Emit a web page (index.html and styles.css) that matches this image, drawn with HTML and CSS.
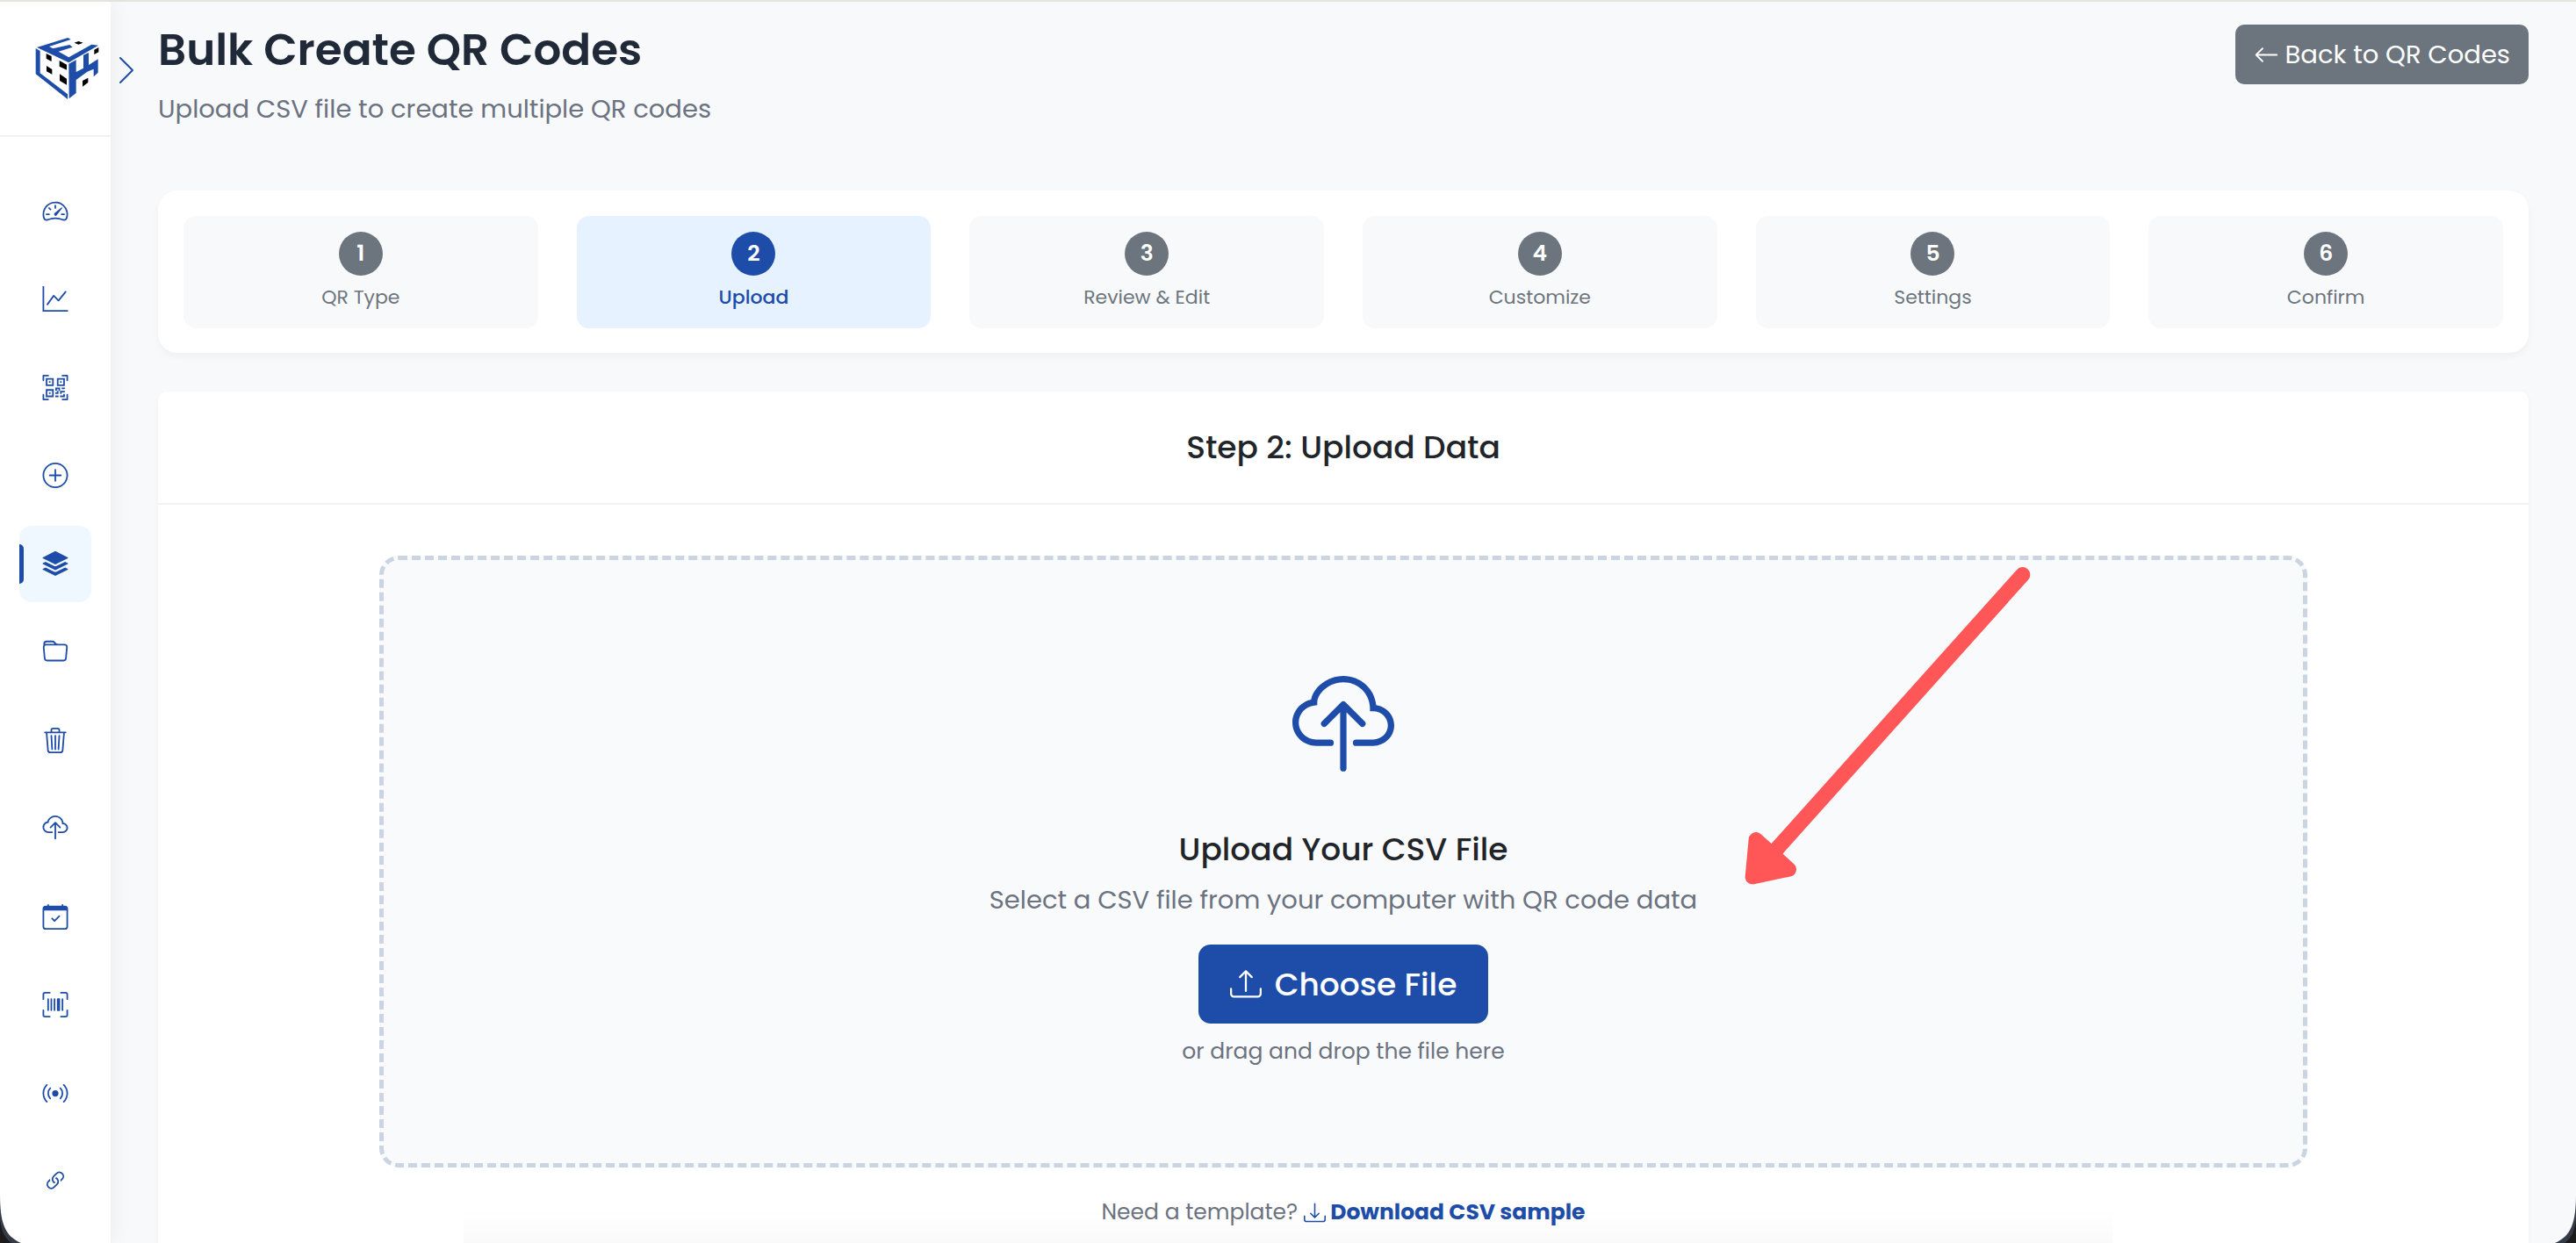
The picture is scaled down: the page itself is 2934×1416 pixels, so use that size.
FILE: index.html
```html
<!DOCTYPE html>
<html lang="en">
<head>
<meta charset="utf-8">
<meta name="viewport" content="width=device-width, initial-scale=1">
<title>Bulk Create QR Codes</title>
<link rel="stylesheet" href="styles.css">
</head>
<body>
<div class="app">
  <aside class="sidebar">
    <div class="brand">
      <a href="#" class="brand-link" aria-label="Home">
        <svg class="brand-logo" viewBox="60 66 219 216" aria-hidden="true">
          <g class="logo-blue">
            <path d="M66 102 172 69l10 6-74 24 13 7 57-13 10 8-48 15 35 20 78-44 23 3-101 59z"/>
            <path d="M62 105l15 9v76l94 72v17L62 193z"/>
            <path d="M175 158l25-13v41l25-13v-45l18-8v42l32-20v46l-15 14v-26l-22 9-38 28v45l-24 19z"/>
          </g>
          <path d="M194 86l14-5 16 5-16 6zM98 123l18 9v18l-18-10zM143 147l25 14v18l-25-12zM99 165l19 12v17l-19-10zM144 193l24 16v21l-24-14zM262 110l15-8v16l-15 8zM222 216l19-10v16l-19 14z"/>
        </svg>
      </a>
    </div>
    <button type="button" class="sidebar-toggle" aria-label="Expand menu">
      <svg viewBox="0 0 18 32" aria-hidden="true"><path d="M2 2 16 16 2 30"/></svg>
    </button>
    <nav class="nav">
      <a href="#" class="nav-item" aria-label="Dashboard"><svg class="icon" viewBox="0 0 16 16"><path d="M8 4a.5.5 0 0 1 .5.5V6a.5.5 0 0 1-1 0V4.5A.5.5 0 0 1 8 4zM3.732 5.732a.5.5 0 0 1 .707 0l.915.914a.5.5 0 1 1-.708.708l-.914-.915a.5.5 0 0 1 0-.707zM2 10a.5.5 0 0 1 .5-.5h1.586a.5.5 0 0 1 0 1H2.5A.5.5 0 0 1 2 10zm9.5 0a.5.5 0 0 1 .5-.5h1.5a.5.5 0 0 1 0 1H12a.5.5 0 0 1-.5-.5zm.754-4.246a.389.389 0 0 0-.527-.02L7.547 9.31a.91.91 0 1 0 1.302 1.258l3.434-4.297a.389.389 0 0 0-.029-.518z"/><path fill-rule="evenodd" d="M0 10a8 8 0 1 1 15.547 2.661c-.442 1.253-1.845 1.602-2.932 1.25C11.309 13.488 9.475 13 8 13c-1.474 0-3.31.488-4.615.911-1.087.352-2.49.003-2.932-1.25A7.988 7.988 0 0 1 0 10zm8-7a7 7 0 0 0-6.603 9.329c.203.575.923.876 1.68.63C4.397 12.533 6.358 12 8 12s3.604.532 4.923.96c.757.245 1.477-.056 1.68-.631A7 7 0 0 0 8 3z"/></svg></a>
      <a href="#" class="nav-item" aria-label="Analytics"><svg class="icon" viewBox="0 0 16 16"><path fill-rule="evenodd" d="M0 0h1v15h15v1H0V0Zm14.817 3.113a.5.5 0 0 1 .07.704l-4.5 5.5a.5.5 0 0 1-.74.037L7.06 6.767l-3.656 5.027a.5.5 0 0 1-.808-.588l4-5.5a.5.5 0 0 1 .758-.06l2.609 2.61 4.15-5.073a.5.5 0 0 1 .704-.07Z"/></svg></a>
      <a href="#" class="nav-item" aria-label="QR codes"><svg class="icon" viewBox="0 0 16 16"><path d="M0 .5A.5.5 0 0 1 .5 0h3a.5.5 0 0 1 0 1H1v2.5a.5.5 0 0 1-1 0v-3Zm12 0a.5.5 0 0 1 .5-.5h3a.5.5 0 0 1 .5.5v3a.5.5 0 0 1-1 0V1h-2.5a.5.5 0 0 1-.5-.5ZM.5 12a.5.5 0 0 1 .5.5V15h2.5a.5.5 0 0 1 0 1h-3a.5.5 0 0 1-.5-.5v-3a.5.5 0 0 1 .5-.5Zm15 0a.5.5 0 0 1 .5.5v3a.5.5 0 0 1-.5.5h-3a.5.5 0 0 1 0-1H15v-2.5a.5.5 0 0 1 .5-.5ZM4 4h1v1H4V4Z"/><path d="M7 2H2v5h5V2ZM3 3h3v3H3V3Zm2 8H4v1h1v-1Z"/><path d="M7 9H2v5h5V9Zm-4 1h3v3H3v-3Zm8-6h1v1h-1V4Z"/><path d="M9 2h5v5H9V2Zm1 1v3h3V3h-3ZM8 8v2h1v1H8v1h2v-2h1v2h1v-1h2v-1h-3V8H8Zm2 2H9V9h1v1Zm4 2h-1v1h-2v1h3v-2Zm-4 2v-1H8v1h2Z"/><path d="M12 9h2V8h-2v1Z"/></svg></a>
      <a href="#" class="nav-item" aria-label="Create"><svg class="icon" viewBox="0 0 16 16"><path d="M8 15A7 7 0 1 1 8 1a7 7 0 0 1 0 14zm0 1A8 8 0 1 0 8 0a8 8 0 0 0 0 16z"/><path d="M8 4a.5.5 0 0 1 .5.5v3h3a.5.5 0 0 1 0 1h-3v3a.5.5 0 0 1-1 0v-3h-3a.5.5 0 0 1 0-1h3v-3A.5.5 0 0 1 8 4z"/></svg></a>
      <a href="#" class="nav-item nav-item-active" aria-label="Bulk create" aria-current="page"><svg class="icon" viewBox="0 0 16 16"><path d="m14.12 10.163 1.715.858c.22.11.22.424 0 .534L8.267 15.34a.598.598 0 0 1-.534 0L.165 11.555a.299.299 0 0 1 0-.534l1.716-.858 5.317 2.659c.505.252 1.1.252 1.604 0l5.317-2.66zM7.733.063a.598.598 0 0 1 .534 0l7.568 3.784a.3.3 0 0 1 0 .535L8.267 8.165a.598.598 0 0 1-.534 0L.165 4.382a.299.299 0 0 1 0-.535L7.733.063z"/><path d="m14.12 6.576 1.715.858c.22.11.22.424 0 .534l-7.568 3.784a.598.598 0 0 1-.534 0L.165 7.968a.299.299 0 0 1 0-.534l1.716-.858 5.317 2.659c.505.252 1.1.252 1.604 0l5.317-2.659z"/></svg></a>
      <a href="#" class="nav-item" aria-label="Folders"><svg class="icon" viewBox="0 0 16 16"><path d="M.54 3.87.5 3a2 2 0 0 1 2-2h3.672a2 2 0 0 1 1.414.586l.828.828A2 2 0 0 0 9.828 3h3.982a2 2 0 0 1 1.992 2.181l-.637 7A2 2 0 0 1 13.174 14H2.826a2 2 0 0 1-1.991-1.819l-.637-7a1.99 1.99 0 0 1 .342-1.31zM2.19 4a1 1 0 0 0-.996 1.09l.637 7a1 1 0 0 0 .995.91h10.348a1 1 0 0 0 .995-.91l.637-7A1 1 0 0 0 13.81 4H2.19zm4.69-1.707A1 1 0 0 0 6.172 2H2.5a1 1 0 0 0-1 .981l.006.139C1.72 3.042 1.95 3 2.19 3h5.396l-.707-.707z"/></svg></a>
      <a href="#" class="nav-item" aria-label="Trash"><svg class="icon" viewBox="0 0 16 16"><path d="M6.5 1h3a.5.5 0 0 1 .5.5v1H6v-1a.5.5 0 0 1 .5-.5ZM11 2.5v-1A1.5 1.5 0 0 0 9.5 0h-3A1.5 1.5 0 0 0 5 1.5v1H2.506a.58.58 0 0 0-.01 0H1.5a.5.5 0 0 0 0 1h.538l.853 10.66A2 2 0 0 0 4.885 16h6.23a2 2 0 0 0 1.994-1.84l.853-10.66h.538a.5.5 0 0 0 0-1h-.995a.59.59 0 0 0-.01 0H11Zm1.958 1-.846 10.58a1 1 0 0 1-.997.92h-6.23a1 1 0 0 1-.997-.92L3.042 3.5h9.916Zm-7.487 1a.5.5 0 0 1 .528.47l.5 8.5a.5.5 0 0 1-.998.06L5 5.03a.5.5 0 0 1 .47-.53Zm5.058 0a.5.5 0 0 1 .47.53l-.5 8.5a.5.5 0 1 1-.998-.06l.5-8.5a.5.5 0 0 1 .528-.47ZM8 4.5a.5.5 0 0 1 .5.5v8.5a.5.5 0 0 1-1 0V5a.5.5 0 0 1 .5-.5Z"/></svg></a>
      <a href="#" class="nav-item" aria-label="Uploads"><svg class="icon" viewBox="0 0 16 16"><use href="#cloud-upload"/></svg></a>
      <a href="#" class="nav-item" aria-label="Calendar"><svg class="icon" viewBox="0 0 16 16"><path d="M10.854 7.146a.5.5 0 0 1 0 .708l-3 3a.5.5 0 0 1-.708 0l-1.5-1.5a.5.5 0 1 1 .708-.708L7.5 9.793l2.646-2.647a.5.5 0 0 1 .708 0z"/><path d="M3.5 0a.5.5 0 0 1 .5.5V1h8V.5a.5.5 0 0 1 1 0V1h1a2 2 0 0 1 2 2v11a2 2 0 0 1-2 2H2a2 2 0 0 1-2-2V3a2 2 0 0 1 2-2h1V.5a.5.5 0 0 1 .5-.5zM1 4v10a1 1 0 0 0 1 1h12a1 1 0 0 0 1-1V4H1z"/></svg></a>
      <a href="#" class="nav-item" aria-label="Barcodes"><svg class="icon" viewBox="0 0 16 16"><path d="M1.5 1a.5.5 0 0 0-.5.5v3a.5.5 0 0 1-1 0v-3A1.5 1.5 0 0 1 1.5 0h3a.5.5 0 0 1 0 1h-3zM11 .5a.5.5 0 0 1 .5-.5h3A1.5 1.5 0 0 1 16 1.5v3a.5.5 0 0 1-1 0v-3a.5.5 0 0 0-.5-.5h-3a.5.5 0 0 1-.5-.5zM.5 11a.5.5 0 0 1 .5.5v3a.5.5 0 0 0 .5.5h3a.5.5 0 0 1 0 1h-3A1.5 1.5 0 0 1 0 14.5v-3a.5.5 0 0 1 .5-.5zm15 0a.5.5 0 0 1 .5.5v3a1.5 1.5 0 0 1-1.5 1.5h-3a.5.5 0 0 1 0-1h3a.5.5 0 0 0 .5-.5v-3a.5.5 0 0 1 .5-.5zM3 4.5a.5.5 0 0 1 1 0v7a.5.5 0 0 1-1 0v-7zm2 0a.5.5 0 0 1 1 0v7a.5.5 0 0 1-1 0v-7zm2 0a.5.5 0 0 1 1 0v7a.5.5 0 0 1-1 0v-7zm2 0a.5.5 0 0 1 .5-.5h1a.5.5 0 0 1 .5.5v7a.5.5 0 0 1-.5.5h-1a.5.5 0 0 1-.5-.5v-7zm3 0a.5.5 0 0 1 1 0v7a.5.5 0 0 1-1 0v-7z"/></svg></a>
      <a href="#" class="nav-item" aria-label="NFC"><svg class="icon" viewBox="0 0 16 16"><path d="M3.05 3.05a7 7 0 0 0 0 9.9.5.5 0 0 1-.707.707 8 8 0 0 1 0-11.314.5.5 0 0 1 .707.707zm2.122 2.122a4 4 0 0 0 0 5.656.5.5 0 1 1-.708.708 5 5 0 0 1 0-7.072.5.5 0 0 1 .708.708zm5.656-.708a.5.5 0 0 1 .708 0 5 5 0 0 1 0 7.072.5.5 0 1 1-.708-.708 4 4 0 0 0 0-5.656.5.5 0 0 1 0-.708zm2.122-2.12a.5.5 0 0 1 .707 0 8 8 0 0 1 0 11.313.5.5 0 0 1-.707-.707 7 7 0 0 0 0-9.9.5.5 0 0 1 0-.707zM10 8a2 2 0 1 1-4 0 2 2 0 0 1 4 0z"/></svg></a>
      <a href="#" class="nav-item" aria-label="Links"><svg class="icon" viewBox="0 0 16 16"><path d="M4.715 6.542 3.343 7.914a3 3 0 1 0 4.243 4.243l1.828-1.829A3 3 0 0 0 8.586 5.5L8 6.086a1.002 1.002 0 0 0-.154.199 2 2 0 0 1 .861 3.337L6.88 11.45a2 2 0 1 1-2.83-2.83l.793-.792a4.018 4.018 0 0 1-.128-1.287z"/><path d="M6.586 4.672A3 3 0 0 0 7.414 9.5l.775-.776a2 2 0 0 1-.896-3.346L9.12 3.55a2 2 0 1 1 2.83 2.83l-.793.792c.112.42.155.855.128 1.287l1.372-1.372a3 3 0 1 0-4.243-4.243L6.586 4.672z"/></svg></a>
    </nav>
  </aside>

  <main class="main">
    <header class="page-header">
      <div class="page-heading">
        <h1 class="page-title">Bulk Create QR Codes</h1>
        <p class="page-subtitle">Upload CSV file to create multiple QR codes</p>
      </div>
      <a href="#" class="back-button">
        <svg class="back-icon" viewBox="0 0 16 16" aria-hidden="true"><path d="M15 8a.5.5 0 0 0-.5-.5H2.707l3.147-3.146a.5.5 0 1 0-.708-.708l-4 4a.5.5 0 0 0 0 .708l4 4a.5.5 0 0 0 .708-.708L2.707 8.5H14.5A.5.5 0 0 0 15 8z"/></svg>
        <span>Back to QR Codes</span>
      </a>
    </header>

    <ol class="steps">
      <li class="step"><span class="step-number">1</span><span class="step-label">QR Type</span></li>
      <li class="step step-active" aria-current="step"><span class="step-number">2</span><span class="step-label">Upload</span></li>
      <li class="step"><span class="step-number">3</span><span class="step-label">Review &amp; Edit</span></li>
      <li class="step"><span class="step-number">4</span><span class="step-label">Customize</span></li>
      <li class="step"><span class="step-number">5</span><span class="step-label">Settings</span></li>
      <li class="step"><span class="step-number">6</span><span class="step-label">Confirm</span></li>
    </ol>

    <section class="card">
      <h2 class="card-header">Step 2: Upload Data</h2>
      <div class="card-body">
        <div class="dropzone">
          <svg class="dropzone-icon" viewBox="0 0 16 16" aria-hidden="true">
            <g id="cloud-upload">
              <path fill-rule="evenodd" d="M4.406 1.342A5.53 5.53 0 0 1 8 0c2.69 0 4.923 2 5.166 4.579C14.758 4.804 16 6.137 16 7.773 16 9.569 14.502 11 12.687 11H10a.5.5 0 0 1 0-1h2.688C13.979 10 15 8.988 15 7.773c0-1.216-1.02-2.228-2.313-2.228h-.5v-.5C12.188 2.825 10.328 1 8 1a4.53 4.53 0 0 0-2.941 1.1c-.757.652-1.153 1.438-1.153 2.055v.448l-.445.049C2.064 4.805 1 5.952 1 7.318 1 8.785 2.23 10 3.781 10H6a.5.5 0 0 1 0 1H3.781C1.708 11 0 9.366 0 7.318c0-1.763 1.266-3.223 2.942-3.593.143-.863.698-1.723 1.464-2.383z"/>
              <path fill-rule="evenodd" d="M7.646 4.146a.5.5 0 0 1 .708 0l3 3a.5.5 0 0 1-.708.708L8.5 5.707V14.5a.5.5 0 0 1-1 0V5.707L5.354 7.854a.5.5 0 1 1-.708-.708l3-3z"/>
            </g>
          </svg>
          <h3 class="dropzone-title">Upload Your CSV File</h3>
          <p class="dropzone-text">Select a CSV file from your computer with QR code data</p>
          <button type="button" class="choose-button">
            <svg class="choose-icon" viewBox="0 0 16 16" aria-hidden="true"><path d="M.5 9.9a.5.5 0 0 1 .5.5v2.5a1 1 0 0 0 1 1h12a1 1 0 0 0 1-1v-2.5a.5.5 0 0 1 1 0v2.5a2 2 0 0 1-2 2H2a2 2 0 0 1-2-2v-2.5a.5.5 0 0 1 .5-.5z"/><path d="M7.646 1.146a.5.5 0 0 1 .708 0l3 3a.5.5 0 0 1-.708.708L8.5 2.707V11.5a.5.5 0 0 1-1 0V2.707L5.354 4.854a.5.5 0 1 1-.708-.708l3-3z"/></svg>
            <span>Choose File</span>
          </button>
          <p class="dropzone-hint">or drag and drop the file here</p>
          <svg class="pointer-arrow" viewBox="80 78 978 1086" aria-hidden="true">
            <path class="arrow-shaft" d="M1030 104 160 1075"/>
            <path class="arrow-head" d="M119 1009 232 1111 107 1137z"/>
          </svg>
        </div>
        <p class="template">
          <span>Need a template?</span>
          <a href="#" class="template-link">
            <svg class="template-icon" viewBox="0 0 16 16" aria-hidden="true"><path d="M.5 9.9a.5.5 0 0 1 .5.5v2.5a1 1 0 0 0 1 1h12a1 1 0 0 0 1-1v-2.5a.5.5 0 0 1 1 0v2.5a2 2 0 0 1-2 2H2a2 2 0 0 1-2-2v-2.5a.5.5 0 0 1 .5-.5z"/><path d="M7.646 11.854a.5.5 0 0 0 .708 0l3-3a.5.5 0 0 0-.708-.708L8.5 10.293V1.5a.5.5 0 0 0-1 0v8.793L5.354 8.146a.5.5 0 1 0-.708.708l3 3z"/></svg>
            <span>Download CSV sample</span>
          </a>
        </p>
      </div>
    </section>
  </main>

  <svg class="corner corner-left" viewBox="0 0 24 56" aria-hidden="true"><path class="corner-rim" d="M0 0C0 32 5 48 24 56H0z"/><path class="corner-back" d="M0 30C2 44 6 51 13 56H0z"/></svg>
  <svg class="corner corner-right" viewBox="0 0 24 56" aria-hidden="true"><path class="corner-rim" d="M0 0C0 32 5 48 24 56H0z"/><path class="corner-back" d="M0 30C2 44 6 51 13 56H0z"/></svg>
</div>
</body>
</html>
```
FILE: styles.css
```css
:root {
  --blue: #1e4da9;
  --grey: #6c757d;
  --muted: #6b7280;
  --page: #f8f9fb;
}

* {
  box-sizing: border-box;
}

body {
  margin: 0;
  font-family: Poppins, Inter, "Liberation Sans", sans-serif;
  color: #212529;
  background: var(--page);
}

h1, h2, h3, p, ol {
  margin: 0;
  padding: 0;
}

a {
  text-decoration: none;
}

svg {
  display: block;
  flex: none;
  fill: currentColor;
}

.app {
  position: relative;
  display: flex;
  height: 100vh;
  overflow: hidden;
  border-top: 2px solid #e2e4df;
}

/* Soft shade along the bottom edge of the window */
.app::after {
  content: "";
  position: absolute;
  right: 18%;
  bottom: 0;
  left: 18%;
  height: 40px;
  background: linear-gradient(rgba(0, 0, 0, 0), rgba(0, 0, 0, 0.02));
  pointer-events: none;
}

/* Sidebar */
.sidebar {
  position: relative;
  display: flex;
  flex: none;
  flex-direction: column;
  width: 126px;
  background: #fff;
  box-shadow: 4px 0 20px rgba(0, 0, 0, 0.05);
}

.brand {
  display: flex;
  align-items: center;
  height: 154px;
  padding-left: 40px;
  border-bottom: 2px solid #f0f1f3;
}

.brand-logo {
  width: 73px;
  height: 72px;
  fill: #000;
}

.logo-blue {
  fill: var(--blue);
}

.sidebar-toggle {
  position: absolute;
  top: 62px;
  left: 135px;
  padding: 0;
  border: 0;
  background: none;
}

.sidebar-toggle svg {
  width: 18px;
  height: 32px;
  fill: none;
  stroke: var(--blue);
  stroke-width: 2;
  stroke-linecap: round;
  stroke-linejoin: round;
}

.nav {
  display: flex;
  flex: 1;
  flex-direction: column;
  justify-content: space-between;
  padding: 41px 22px 27px;
}

.nav-item {
  position: relative;
  display: flex;
  align-items: center;
  justify-content: center;
  height: 87px;
  overflow: hidden;
  border-radius: 14px;
  color: var(--blue);
}

.nav-item-active {
  background: #f0f8ff;
}

.nav-item-active::before {
  content: "";
  position: absolute;
  top: 21px;
  bottom: 21px;
  left: 0;
  width: 5px;
  border-radius: 0 5px 5px 0;
  background: var(--blue);
}

.icon {
  width: 30px;
  height: 29px;
}

/* Page */
.main {
  flex: 1;
  min-width: 0;
  padding: 26px 54px 0;
}

.page-header {
  display: flex;
  align-items: flex-start;
  justify-content: space-between;
  margin-bottom: 70px;
}

.page-title {
  margin-bottom: 15px;
  font-size: 50px;
  font-weight: 600;
  line-height: 58px;
  color: #1f2937;
}

.page-subtitle {
  font-size: 29px;
  line-height: 46px;
  color: var(--muted);
}

.back-button {
  display: flex;
  align-items: center;
  gap: 7px;
  height: 68px;
  padding: 0 21px;
  border-radius: 10px;
  background: var(--grey);
  font-size: 29px;
  color: #fff;
}

.back-icon {
  width: 29px;
  height: 29px;
}

/* Steps */
.steps {
  display: grid;
  grid-template-columns: repeat(6, 1fr);
  gap: 44px;
  margin-bottom: 44px;
  padding: 29px 29px 28px;
  border-radius: 22px;
  background: #fff;
  box-shadow: 0 4px 8px rgba(0, 0, 0, 0.04);
  list-style: none;
}

.step {
  display: flex;
  flex-direction: column;
  align-items: center;
  gap: 10px;
  padding: 18px 0 20px;
  border-radius: 14px;
  background: var(--page);
  color: var(--grey);
}

.step-number {
  width: 50px;
  border-radius: 50%;
  background: var(--grey);
  font-size: 25px;
  font-weight: 600;
  line-height: 50px;
  text-align: center;
  color: #fff;
}

.step-label {
  font-size: 22px;
  line-height: 30px;
}

.step-active {
  background: #e6f2ff;
  color: var(--blue);
}

.step-active .step-number {
  background: var(--blue);
}

.step-active .step-label {
  font-weight: 500;
}

/* Upload card */
.card {
  border-radius: 10px 10px 0 0;
  background: #fff;
  box-shadow: 0 2px 6px rgba(0, 0, 0, 0.04);
}

.card-header {
  padding: 40px;
  border-bottom: 2px solid #f0f1f3;
  font-size: 36px;
  font-weight: 500;
  line-height: 47px;
  text-align: center;
}

.card-body {
  padding: 58px 32px;
}

.dropzone {
  position: relative;
  display: flex;
  flex-direction: column;
  align-items: center;
  width: 83.3333%;
  margin: 0 auto 31px;
  padding: 132px 40px 107px;
  border: 5px dashed #cbd5e1;
  border-radius: 22px;
  background: #f9fafc;
}

.dropzone-icon {
  width: 116px;
  height: 116px;
  margin-bottom: 59px;
  color: var(--blue);
}

.dropzone-title {
  margin-bottom: 12px;
  font-size: 36px;
  font-weight: 500;
  line-height: 46px;
}

.dropzone-text {
  margin-bottom: 29px;
  font-size: 29px;
  line-height: 44px;
  color: var(--muted);
}

.choose-button {
  display: flex;
  align-items: center;
  gap: 15px;
  height: 90px;
  margin-bottom: 12px;
  padding: 0 36px;
  border: 0;
  border-radius: 14px;
  background: var(--blue);
  font-family: inherit;
  font-size: 36px;
  font-weight: 500;
  color: #fff;
}

.choose-icon {
  width: 36px;
  height: 36px;
}

.dropzone-hint {
  font-size: 25px;
  line-height: 40px;
  color: var(--muted);
}

.pointer-arrow {
  position: absolute;
  top: 8px;
  right: 310px;
  width: 326px;
  height: 362px;
  fill: #ff5757;
  stroke: #ff5757;
  stroke-linecap: round;
  stroke-linejoin: round;
}

.arrow-shaft {
  stroke-width: 52;
}

.arrow-head {
  stroke-width: 50;
}

.template {
  display: flex;
  align-items: center;
  justify-content: center;
  gap: 7px;
  font-size: 25px;
  line-height: 40px;
  color: var(--muted);
}

.template-link {
  display: flex;
  align-items: center;
  gap: 5px;
  font-weight: 700;
  color: var(--blue);
}

.template-icon {
  width: 25px;
  height: 25px;
}

/* Rounded window corners */
.corner {
  position: absolute;
  bottom: 0;
  width: 24px;
  height: 56px;
}

.corner-left {
  left: 0;
}

.corner-right {
  right: 0;
  transform: scaleX(-1);
}

.corner-rim {
  fill: #343a46;
}

.corner-back {
  fill: #1c1b1c;
}
```
